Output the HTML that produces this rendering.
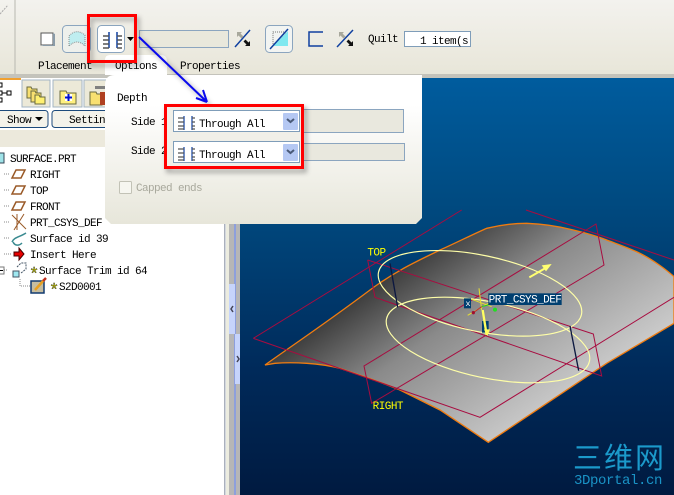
<!DOCTYPE html>
<html><head><meta charset="utf-8"><style>
html,body{margin:0;padding:0;background:#fff;width:674px;height:495px;overflow:hidden}
svg{display:block;position:absolute;left:0;top:0}
text{font-family:"Liberation Mono",monospace;font-size:11px;letter-spacing:-.6px;fill:#000}
.w text{font-size:33px;letter-spacing:-1.6px;fill:#ff0}
</style></head><body>
<svg width="674" height="495" viewBox="0 0 674 495" xmlns="http://www.w3.org/2000/svg">
<defs>
<linearGradient id="tb" x1="0" y1="0" x2="0" y2="1"><stop offset="0" stop-color="#f3f2ee"/><stop offset="1" stop-color="#e8e6d9"/></linearGradient>
<linearGradient id="vp" x1="0" y1="0" x2="0" y2="1"><stop offset="0" stop-color="#005c9e"/><stop offset=".3" stop-color="#004a80"/><stop offset=".7" stop-color="#002a5a"/><stop offset="1" stop-color="#001a40"/></linearGradient>
<linearGradient id="pop" x1="0" y1="0" x2="0" y2="1"><stop offset="0" stop-color="#fff"/><stop offset=".2" stop-color="#fff"/><stop offset="1" stop-color="#e7e6da"/></linearGradient>
<linearGradient id="sf" gradientUnits="userSpaceOnUse" x1="480" y1="170" x2="850" y2="700"><stop offset="0" stop-color="#3c3c3c"/><stop offset=".35" stop-color="#8a8a8a"/><stop offset="1" stop-color="#d0d0d0"/></linearGradient>
<filter id="sh" x="-20%" y="-20%" width="140%" height="140%"><feGaussianBlur stdDeviation="2.5"/></filter>
</defs>

<!-- toolbar -->
<rect width="674" height="74" fill="url(#tb)"/>
<rect y="74" width="674" height="4" fill="#c4c3bb"/>
<path d="M15 0V74" stroke="#b8b8b0" fill="none"/>
<path d="M0 14L8 5" stroke="#aaa" stroke-dasharray="2 1" fill="none"/>

<!-- left panel -->
<rect x="0" y="78" width="225" height="417" fill="#fff"/>
<rect x="0" y="130" width="225" height="17" fill="#ece9dc"/>
<!-- tabs -->
<rect x="0" y="78" width="21.500" height="31" fill="#fff"/>
<rect x="0" y="78" width="21" height="2" fill="#f0a030"/>
<path d="M22 80H50V107H22Z" fill="#ece9d8" stroke="#a3b5c4"/>
<path d="M53 80H82V107H53Z" fill="#ece9d8" stroke="#a3b5c4"/>
<path d="M84 80H106V107H84Z" fill="#ece9d8" stroke="#a3b5c4"/>
<g fill="none" stroke="#000">
<rect x="-2" y="83" width="4" height="4"/><rect x="-2" y="91" width="4" height="4"/><rect x="-2" y="98" width="4" height="4"/><rect x="7" y="91" width="4" height="4"/><path d="M2 93H7"/>
</g>
<g stroke="#6a6a40" fill="#f8e070">
<path d="M27 87h4l1 2h5v9h-10z"/><path d="M31 91h4l1 2h5v9h-10z"/><path d="M35 95h4l1 2h5v7h-10z" fill="#fff070"/>
<path d="M60 91h6l1 2h9v11h-16z" fill="#fff080"/>
</g>
<path d="M65 94h7v7h-7z" fill="#fff"/><path d="M68.500 94v7M65 97.500h7" stroke="#0010d0" stroke-width="2"/>
<path d="M90 92h6l1 2h5v11h-12z" fill="#f8e070" stroke="#6a6a40"/>
<rect x="100" y="92" width="5" height="13" fill="#b04020"/>
<path d="M95 86h10v3h-10z" fill="#808080"/>
<!-- buttons -->
<rect x="-3" y="110.500" width="51" height="17" rx="3" fill="#f3f2ea" stroke="#1c4a7c"/>
<rect x="52" y="110.500" width="62" height="17" rx="3" fill="#f3f2ea" stroke="#1c4a7c"/>
<text x="7" y="123">Show</text>
<path d="M35 117h8l-4 4z"/>
<text x="69" y="123">Settin</text>

<!-- tree -->
<path d="M4 174H10M4 190H10M4 206H10M4 222H10M4 238H10M4 254H12M4 270H8" stroke="#888" stroke-dasharray="1 1" fill="none"/>
<path d="M20 279V286H30" stroke="#888" stroke-dasharray="1 1" fill="none"/>
<text x="10" y="162">SURFACE.PRT</text>
<text x="30" y="178">RIGHT</text>
<text x="30" y="194">TOP</text>
<text x="30" y="210">FRONT</text>
<text x="30" y="226">PRT_CSYS_DEF</text>
<text x="30" y="242">Surface id 39</text>
<text x="30" y="258">Insert Here</text>
<text x="39" y="274">Surface Trim id 64</text>
<text x="59" y="290">S2D0001</text>
<rect x="-3" y="153" width="7" height="10" fill="#9fe3e8" stroke="#345"/>
<g fill="none" stroke="#9a5a28" stroke-width="1.500">
<path d="M12 178l4-8h9l-4 8z"/><path d="M12 194l4-8h9l-4 8z"/><path d="M12 210l4-8h9l-4 8z"/>
<path d="M12 215l14 14M24 214l-10 16M17 214v16" stroke-width="1"/>
</g>
<path d="M12 242c2-5 8-5 14-9M13 242c2 4 6 4 9 1" fill="none" stroke="#3a8a90" stroke-width="1.500"/>
<path d="M14 252h5v-4l5 6-5 6v-4h-5z" fill="#e80000" stroke="#400"/>
<rect x="-3" y="267" width="7" height="7" fill="#fff" stroke="#777"/><path d="M-1 270.500h4" stroke="#000"/>
<rect x="13" y="271" width="6" height="6" fill="#9fe8f0" stroke="#456"/>
<path d="M17 267l4-4h5v6l-5 4" fill="none" stroke="#456" stroke-dasharray="2 1"/>
<text x="29" y="279" style="font-size:17px;fill:#e8e800;stroke:#222;stroke-width:.4">*</text>
<text x="49" y="295" style="font-size:17px;fill:#e8e800;stroke:#222;stroke-width:.4">*</text>
<rect x="31" y="281" width="13" height="12" fill="#c6bda0" stroke="#103a70" stroke-width="1.500"/>
<path d="M35 290l9-10" stroke="#e8a020" stroke-width="2.500"/><path d="M43 281l3-3" stroke="#c03020" stroke-width="2.500"/>

<!-- sash -->
<rect x="224" y="78" width="1.500" height="417" fill="#aab0bc"/>
<rect x="226" y="78" width="3" height="417" fill="#ececdf"/>
<rect x="229" y="78" width="5" height="417" fill="#b6b6b6"/>
<rect x="234" y="78" width="2" height="417" fill="#8d9fdc"/>
<rect x="236" y="78" width="4" height="417" fill="#b6b6b6"/>
<rect x="229" y="284" width="6" height="50" fill="#c6d4fb"/>
<rect x="235" y="334" width="6" height="50" fill="#c6d4fb"/>
<path d="M233 306l-2 3 2 3" fill="none" stroke="#445" stroke-width="1.500"/>
<path d="M237 356l2 3-2 3" fill="none" stroke="#445" stroke-width="1.500"/>

<!-- viewport -->
<rect x="240" y="78" width="434" height="417" fill="url(#vp)"/>
<g transform="translate(240 210) scale(.33333)" fill="none">
<path d="M75 465C130 425 250 345 390 240C470 180 540 150 600 120C650 98 700 72 740 55C790 43 830 40 860 40C920 42 960 50 1000 60C1050 72 1080 82 1100 90C1140 105 1170 115 1200 130C1240 150 1280 180 1302 200V340L1100 460L745 697L600 600C560 580 520 560 480 540C420 515 360 495 300 475C260 465 230 462 200 460C170 458 130 458 105 460Z" fill="url(#sf)" stroke="#f07c10" stroke-width="4"/>
<g stroke="#a80c40" stroke-width="3">
<path d="M40 385L665 0M40 385L720 622L1302 262M858 0L1302 150"/>
<path d="M383 150L405 262L1085 498L1060 372L383 150"/>
<path d="M1068 42L1092 165L395 580L372 468Z"/>
</g>
<g stroke="#ffffa8" stroke-width="3.500">
<ellipse cx="720" cy="250" rx="311" ry="114" transform="rotate(11.750 720 250)"/>
<ellipse cx="744" cy="390" rx="311" ry="114" transform="rotate(11.750 744 390)"/>
</g>
<path d="M450 160L473 292M990 348L1016 482" stroke="#0c1840" stroke-width="4"/>
<path d="M868 202L915 175" stroke="#ffff70" stroke-width="6"/><path d="M935 162L905 166L918 184Z" fill="#ffff70"/>
<path d="M717 235L725 300M695 268L755 290M683 316L745 280" stroke="#e8e030" stroke-width="3"/>
<path d="M725 290L762 300" stroke="#20d020" stroke-width="3" transform="rotate(-30 725 290)"/>
<circle cx="765" cy="299" r="6" fill="#20e020"/>
<path d="M725 290L700 308" stroke="#c03030" stroke-width="3"/>
<circle cx="700" cy="308" r="5" fill="#a01030"/>
<rect x="672" y="265" width="21" height="30" fill="#003f70"/>
<rect x="726" y="333" width="20" height="35" fill="#003f70"/>
<path d="M728 300L740 375" stroke="#ffff60" stroke-width="7"/><path d="M732 358L750 358L742 378Z" fill="#ffff60"/>
<rect x="745" y="250" width="220" height="35" fill="#003f70"/>
<g class="w">
<text x="382" y="136">TOP</text>
<text x="398" y="597">RIGHT</text>
<text x="746" y="278" style="fill:#fff">PRT_CSYS_DEF</text>
<text x="676" y="288" style="fill:#fff;font-size:26px">x</text>
</g>
</g>
<!-- watermark -->
<text x="573" y="468" style="font-family:'Liberation Sans','Noto Sans CJK SC',sans-serif;font-size:29px;letter-spacing:2px;fill:#1b9acb">三维网</text>
<text x="574" y="484" style="font-size:14px;letter-spacing:-.4px;fill:#1a94c6">3Dportal.cn</text>

<!-- popup -->
<path d="M105 85Q105 75 115 75V75H422V218L416 224H111L105 218Z" fill="url(#pop)"/>
<path d="M105 75V60Q105 55 110 55H161Q167 55 167 62V75Z" fill="#fff"/>

<text x="117" y="101">Depth</text>
<text x="131" y="125">Side 1</text>
<text x="131" y="154">Side 2</text>
<rect x="300" y="109.500" width="103.500" height="23" fill="#e9e8de" stroke="#8ba5bf"/>
<rect x="300" y="143.500" width="104.500" height="17" fill="#e9e8de" stroke="#8ba5bf"/>
<rect x="119.500" y="181.500" width="12" height="12" rx="1" fill="#f6f6f0" stroke="#c2c2b6"/>
<text x="136" y="191" style="fill:#a8a89c">Capped ends</text>

<!-- toolbar icons -->
<rect x="41" y="33" width="12" height="12" fill="#fff" stroke="#555"/>
<path d="M53 33l2 1v12h-12l-2-1h12z" fill="#8a9ba8"/>
<rect x="62.500" y="25.500" width="28" height="27" rx="4" fill="#eef0ec" stroke="#8ba5bf"/>
<path d="M69 46V36Q76 28 85 35V46Q77 38 69 46Z" fill="#bfeef0" stroke="#8a8f90" stroke-dasharray="1 1"/>
<rect x="97.500" y="25.500" width="27" height="27" rx="4" fill="#fff" stroke="#8ba5bf"/>
<path d="M109 32V48M117 32V48" stroke="#1040a0" stroke-width="1.500"/>
<path d="M103 36h6M103 40h6M103 44h6M103 48h6M117 36h5M117 40h5M117 44h5M117 48h5" stroke="#555" stroke-width="1.500"/>
<path d="M127 37h7l-3.500 4z"/>
<rect x="139.500" y="30.500" width="89" height="17" fill="#e9e8dc" stroke="#8ba5bf"/>
<g id="flip"><path d="M235 47L250 30" stroke="#1040a0" stroke-width="1.500"/><path d="M237 32h5l-1.500 1.500 3 3-2 2-3-3-1.500 1.500z" fill="#a8a89c"/><path d="M250 46h-5l1.500-1.500-3-3 2-2 3 3 1.500-1.500z" fill="#111"/></g>
<rect x="265.500" y="25.500" width="27" height="27" rx="4" fill="#f2f4f2" stroke="#8ba5bf"/>
<path d="M273 32h13l-13 14z" fill="none" stroke="#777" stroke-dasharray="1 1"/>
<path d="M273 46L288 31V46Z" fill="#7fe8f0"/>
<path d="M270 49L288 29" stroke="#1040a0" stroke-width="1.500"/>
<path d="M323 32H309V46H323" fill="none" stroke="#1040a0" stroke-width="1.500"/>
<path d="M337 47L353 30" stroke="#1040a0" stroke-width="1.500"/><path d="M339 32h5l-1.500 1.500 3 3-2 2-3-3-1.500 1.500z" fill="#a8a89c"/><path d="M353 46h-5l1.500-1.500-3-3 2-2 3 3 1.500-1.500z" fill="#111"/>
<text x="368" y="42">Quilt</text>
<rect x="404.500" y="31.500" width="66" height="15" fill="#fff" stroke="#7f9db9"/>
<text x="420" y="44">1 item(s</text>
<text x="38" y="69">Placement</text>
<text x="115" y="69">Options</text>
<text x="180" y="69">Properties</text>

<!-- shadows -->
<g fill="none">
<rect x="168" y="109" width="137" height="62" stroke="#444" stroke-width="4" opacity=".4" filter="url(#sh)"/>
<rect x="91" y="19" width="47" height="46" stroke="#444" stroke-width="4" opacity=".35" filter="url(#sh)"/>
<path d="M142 40L210 105" stroke="#444" stroke-width="3" opacity=".35" filter="url(#sh)"/>
</g>
<!-- combos -->
<rect x="167" y="107" width="134" height="59" fill="#f0efe8"/>
<rect x="173.500" y="110.500" width="126" height="21" fill="#fff" stroke="#7f9db9"/>
<rect x="173.500" y="141.500" width="126" height="21" fill="#fff" stroke="#7f9db9"/>
<rect x="283" y="113" width="15" height="17" rx="1" fill="#b5c8f3"/>
<rect x="283" y="144" width="15" height="17" rx="1" fill="#b5c8f3"/>
<path d="M287 119l3.500 3 3.500-3" fill="none" stroke="#4a5a78" stroke-width="2"/>
<path d="M287 150l3.500 3 3.500-3" fill="none" stroke="#4a5a78" stroke-width="2"/>
<g stroke-width="1.200" fill="none">
<path d="M184 116V130M192 116V130M184 147V161M192 147V161" stroke="#1040a0"/>
<path d="M178 118h6M178 122h6M178 126h6M178 129h6M192 118h3M192 122h3M192 126h3M192 129h3M178 149h6M178 153h6M178 157h6M178 160h6M192 149h3M192 153h3M192 157h3M192 160h3" stroke="#555"/>
</g>
<text x="199" y="127">Through All</text>
<text x="199" y="158">Through All</text>

<!-- annotations -->
<rect x="88.500" y="15.500" width="47" height="46" fill="none" stroke="#f00" stroke-width="3"/>
<rect x="165.500" y="105.500" width="137" height="62" fill="none" stroke="#f00" stroke-width="3"/>
<path d="M139 37L207 102M207 102L196 98M207 102L203 90" fill="none" stroke="#0a0aee" stroke-width="2"/>
</svg>
</body></html>
